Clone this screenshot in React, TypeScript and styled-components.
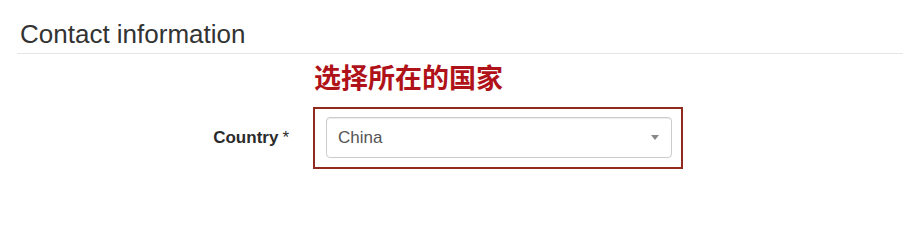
import styled, { createGlobalStyle } from 'styled-components';

const GlobalStyle = createGlobalStyle`
  html, body {
    margin: 0;
    padding: 0;
    background: #fff;
  }
  body {
    font-family: 'Liberation Sans', Arial, sans-serif;
  }
`;

const Section = styled.section`
  padding: 19px 7px 0 17px;
`;

const SectionTitle = styled.h2`
  margin: 0;
  padding: 0 0 4px 3px;
  font-size: 26px;
  line-height: 30px;
  font-weight: 400;
  color: #333;
  border-bottom: 1px solid #e5e5e5;
`;

const FormGrid = styled.div`
  display: grid;
  grid-template-columns: 296px 370px;
  row-gap: 15px;
  align-items: center;
  margin-top: 8px;
`;

const Hint = styled.div`
  grid-column: 2;
  padding-left: 1px;
  font-family: 'Noto Sans CJK SC', 'Liberation Sans', sans-serif;
  font-size: 27px;
  line-height: 30px;
  font-weight: 700;
  color: #b0121a;
`;

const Label = styled.label`
  grid-column: 1;
  padding-right: 24px;
  text-align: right;
  font-size: 17px;
  color: #2b2b2b;
`;

const Required = styled.span`
  font-weight: 400;
  margin-left: 4px;
`;

const Highlight = styled.div`
  grid-column: 2;
  border: 2px solid #922b1f;
  padding: 8px 9px 9px 11px;
`;

const Select = styled.div`
  display: flex;
  align-items: center;
  justify-content: space-between;
  box-sizing: border-box;
  height: 41px;
  padding: 0 12px 0 11px;
  border: 1px solid #ccc;
  border-radius: 4px;
  box-shadow: inset 0 1px 1px rgba(0, 0, 0, 0.075);
  font-size: 17px;
  color: #555;
`;

const Caret = styled.span`
  width: 0;
  height: 0;
  border-left: 4px solid transparent;
  border-right: 4px solid transparent;
  border-top: 5px solid #888;
`;

export default function App() {
  return (
    <>
      <GlobalStyle />
      <Section>
        <SectionTitle>Contact information</SectionTitle>
        <FormGrid>
          <Hint>选择所在的国家</Hint>
          <Label>
            <b>Country</b>
            <Required>*</Required>
          </Label>
          <Highlight>
            <Select>
              <span>China</span>
              <Caret />
            </Select>
          </Highlight>
        </FormGrid>
      </Section>
    </>
  );
}
